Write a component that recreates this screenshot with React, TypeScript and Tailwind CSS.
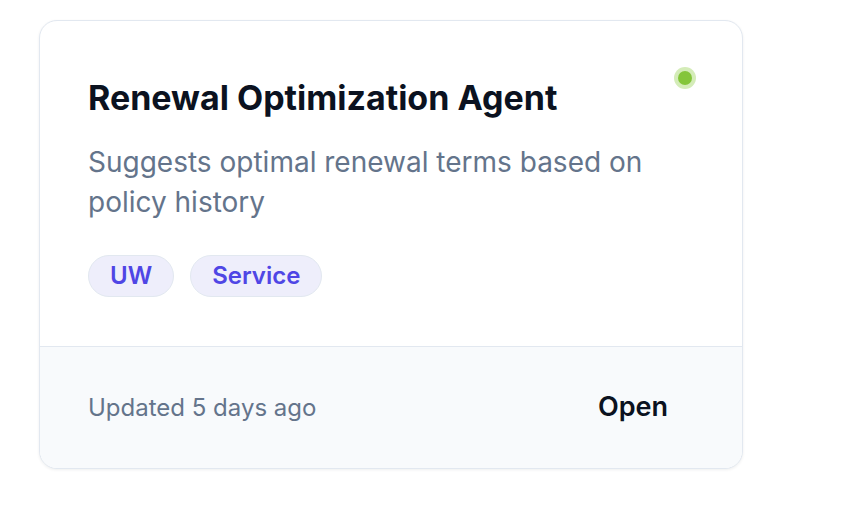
export default function App() {
  return (
    <div className="min-h-screen bg-white pl-[39px] pt-[20px]" style={{ fontFamily: "Inter, 'Noto Sans', sans-serif" }}>
      <div className="w-[704px] overflow-hidden rounded-[18px] border border-[#e2e8f0] bg-white shadow-[0_1px_3px_rgba(15,23,42,0.07)]">
        <div className="relative px-12 pt-[59px] pb-[49px]">
          <span className="absolute right-[46px] top-[46px] flex h-[22px] w-[22px] items-center justify-center rounded-full bg-[#d4ecb8]">
            <span className="h-[14px] w-[14px] rounded-full bg-[#84c53a]" />
          </span>
          <h2 className="text-[34px] font-bold leading-[36px] tracking-[0px] text-[#0b1220]">Renewal Optimization Agent</h2>
          <p className="mt-[26px] w-[580px] text-[28px] leading-[40px] text-[#64748b]">
            Suggests optimal renewal terms based on policy history
          </p>
          <div className="mt-[33px] flex gap-4">
            <span className="flex h-[42px] items-center rounded-full border border-[#e2e8f0] bg-[#eeeefb] px-[21px] text-[24px] font-semibold text-[#4f46e5]">UW</span>
            <span className="flex h-[42px] items-center rounded-full border border-[#e2e8f0] bg-[#eeeefb] px-[21px] text-[24px] font-semibold text-[#4f46e5]">Service</span>
          </div>
        </div>
        <div className="flex h-[122px] items-center justify-between border-t border-[#e2e8f0] bg-[#f8fafc] pl-12 pr-[74px]">
          <span className="text-[24px] text-[#64748b]">Updated 5 days ago</span>
          <span className="text-[27px] font-semibold text-[#0b1220]">Open</span>
        </div>
      </div>
    </div>
  );
}
